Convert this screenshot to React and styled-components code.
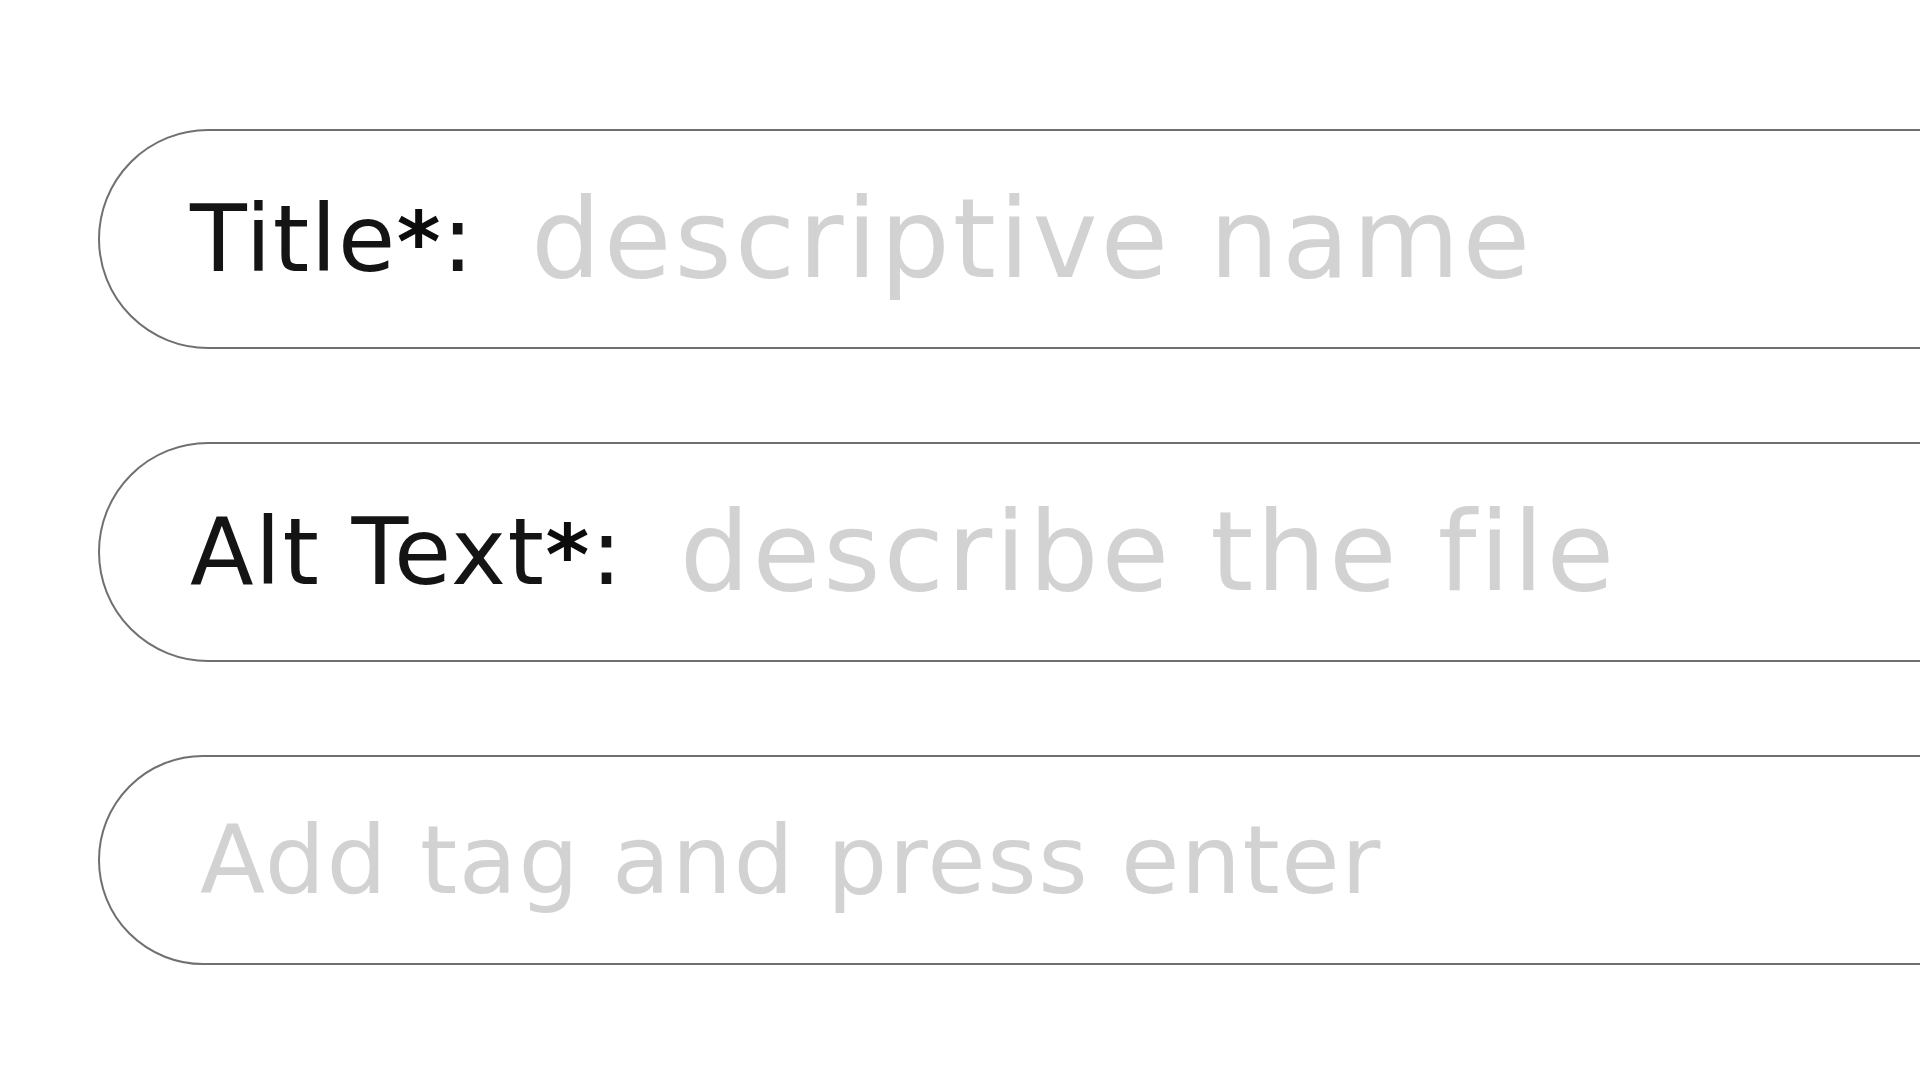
import React from "react";
import styled, { createGlobalStyle } from "styled-components";

const GlobalStyle = createGlobalStyle`
  html, body {
    margin: 0;
    padding: 0;
    background: #ffffff;
    overflow: hidden;
  }
  body {
    font-family: "DejaVu Sans", "Liberation Sans", sans-serif;
  }
`;

const Page = styled.div`
  width: 100vw;
  height: 100vh;
  overflow: hidden;
  box-sizing: border-box;
  padding: 129px 0 0 98px;
`;

const Form = styled.form`
  width: 2100px;
  display: flex;
  flex-direction: column;
  gap: 93px;
`;

const Field = styled.label`
  box-sizing: border-box;
  display: flex;
  align-items: center;
  gap: 56px;
  height: ${(p) => (p.$tags ? 210 : 220)}px;
  padding-left: ${(p) => (p.$tags ? 100 : 90)}px;
  border: 2px solid #707070;
  border-radius: 120px;
  background: #fff;
`;

const Label = styled.span`
  font-size: 93px;
  letter-spacing: 1.5px;
  color: #141414;
  white-space: nowrap;
`;

const Req = styled.b`
  font-weight: 700;
  font-size: 0.9em;
  color: #0c0c0c;
`;

const Input = styled.input`
  flex: 1;
  min-width: 0;
  border: none;
  outline: none;
  background: transparent;
  padding: 0;
  font-family: inherit;
  font-size: ${(p) => (p.$tags ? 95 : 110)}px;
  letter-spacing: ${(p) => (p.$tags ? 1.5 : 3)}px;
  color: #141414;

  &::placeholder {
    color: #d2d2d2;
    opacity: 1;
  }
`;

export default function App() {
  return (
    <>
      <GlobalStyle />
      <Page>
        <Form onSubmit={(e) => e.preventDefault()}>
          <Field>
            <Label>
              Title<Req>*</Req>:
            </Label>
            <Input placeholder="descriptive name" />
          </Field>
          <Field>
            <Label>
              Alt Text<Req>*</Req>:
            </Label>
            <Input placeholder="describe the file" />
          </Field>
          <Field $tags>
            <Input $tags placeholder="Add tag and press enter" />
          </Field>
        </Form>
      </Page>
    </>
  );
}
